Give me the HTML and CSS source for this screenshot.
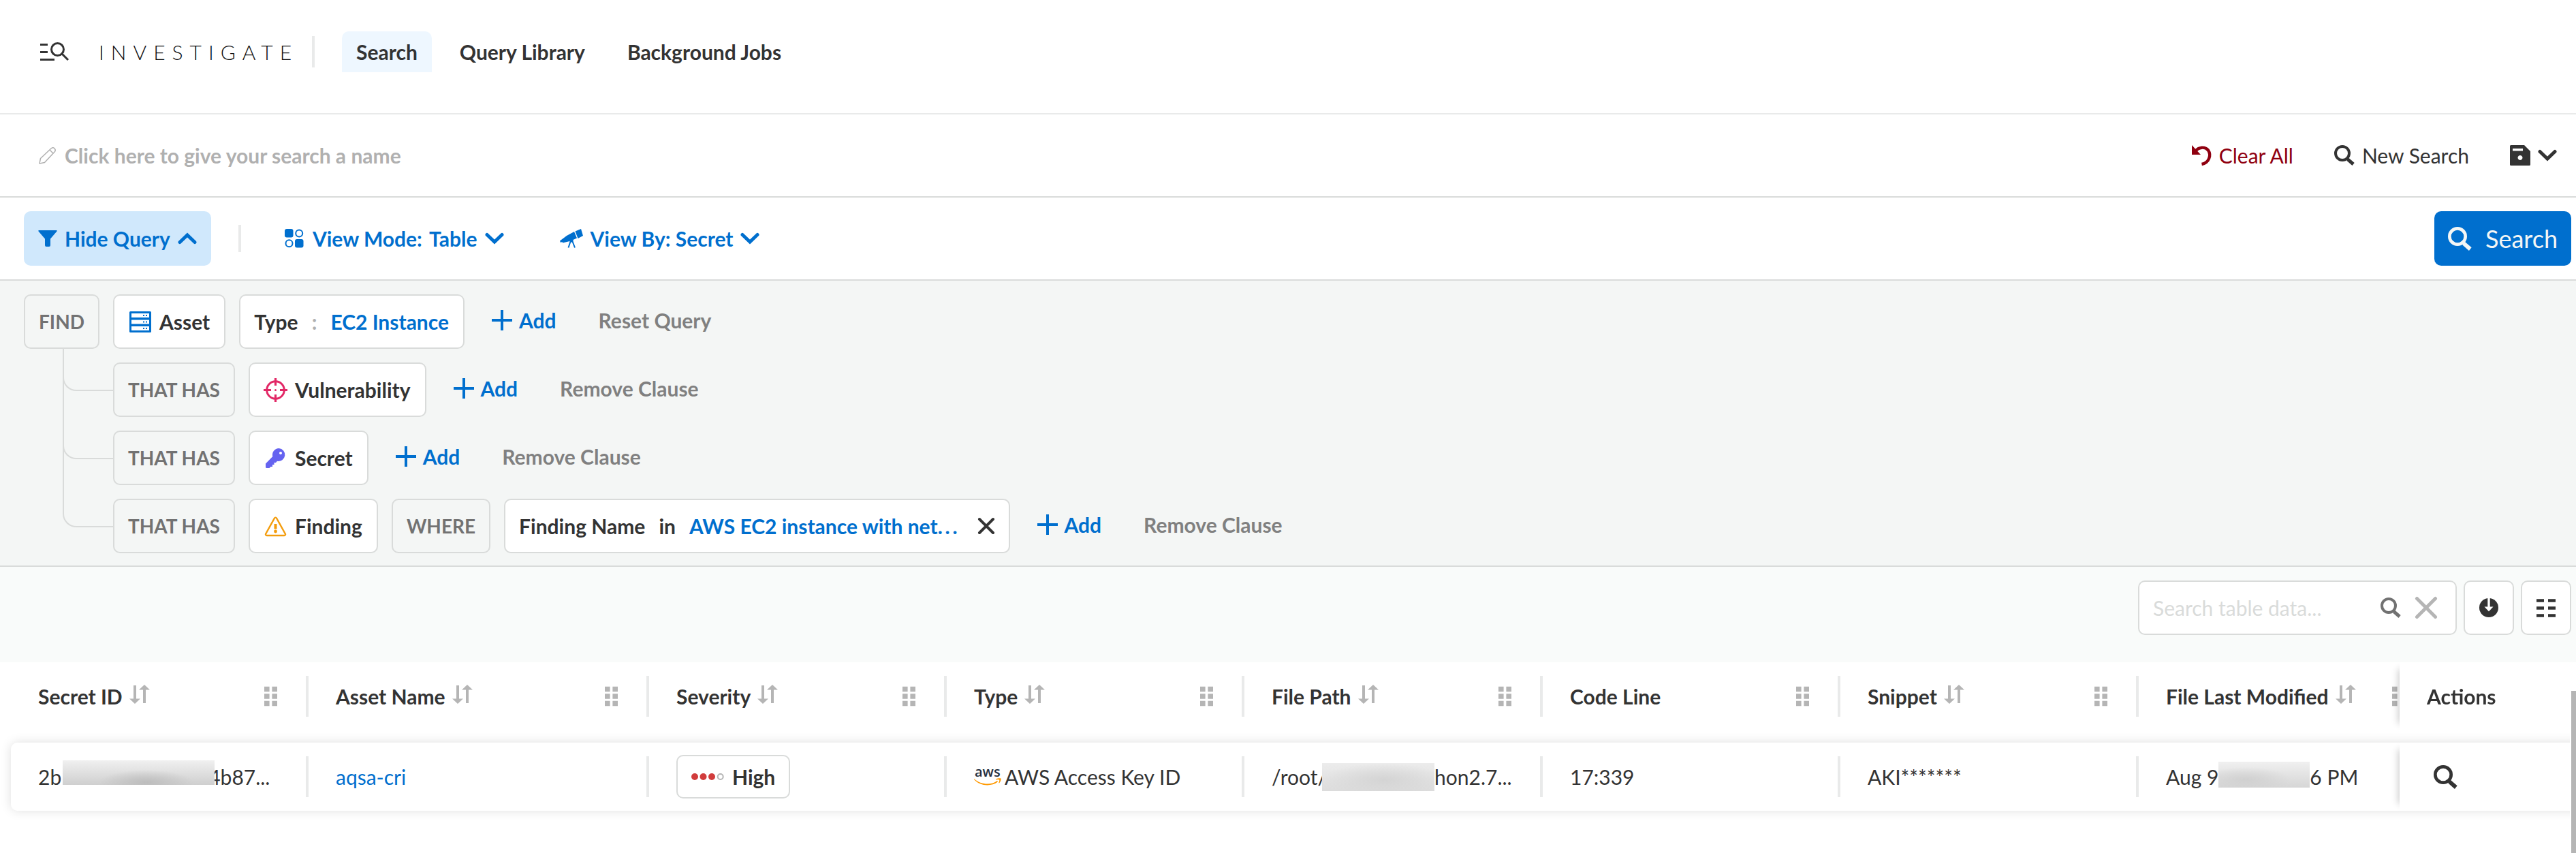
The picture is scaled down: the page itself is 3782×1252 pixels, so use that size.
FILE: index.html
```html
<!DOCTYPE html>
<html lang="en">
<head>
<meta charset="utf-8">
<title>Investigate</title>
<link rel="stylesheet" href="styles.css">
</head>
<body>
<svg class="sprite" aria-hidden="true">
  <symbol id="i-search" viewBox="0 0 30 30"><circle cx="12" cy="12" r="10" fill="none" stroke="currentColor" stroke-width="4"/><path d="M18.500 20.500l2.500-2 8.700 7.500-3.200 4-8-7z" fill="currentColor"/></symbol>
  <symbol id="i-down" viewBox="0 0 28 18"><path d="M3 3.500l11 10.500L25 3.500" fill="none" stroke="currentColor" stroke-width="5" stroke-linecap="round"/></symbol>
  <symbol id="i-up" viewBox="0 0 28 18"><path d="M3 14.500l11-10.500L25 14.500" fill="none" stroke="currentColor" stroke-width="5" stroke-linecap="round"/></symbol>
  <symbol id="i-plus" viewBox="0 0 30 30"><path d="M15 0v30M0 15h30" fill="none" stroke="currentColor" stroke-width="4"/></symbol>
  <symbol id="i-sort" viewBox="0 0 30 28"><path d="M8 1v21M22 27V6" fill="none" stroke="currentColor" stroke-width="4"/><path d="M0 20.500h16L8 28zM14 7.500h16L22 0z" fill="currentColor"/></symbol>
  <symbol id="i-grip" viewBox="0 0 20 30"><path d="M0 0h8v8H0zM12 0h8v8h-8zM0 11h8v8H0zM12 11h8v8h-8zM0 22h8v8H0zM12 22h8v8h-8z" fill="currentColor"/></symbol>
</svg>

<header class="topbar">
  <svg class="brand-icon" viewBox="0 0 42 28"><path d="M0 3.500h11M0 14.500h11M0 25.500h21" stroke="currentColor" stroke-width="3"/><circle cx="25.500" cy="10.500" r="9" fill="none" stroke="currentColor" stroke-width="3"/><path d="M32 17l9 9" stroke="currentColor" stroke-width="3"/></svg>
  <h1 class="brand">INVESTIGATE</h1>
  <nav class="tabs">
    <a class="tab tab-active" href="#search">Search</a>
    <a class="tab" href="#library">Query Library</a>
    <a class="tab" href="#jobs">Background Jobs</a>
  </nav>
</header>

<section class="namebar">
  <label class="name-field">
    <svg class="ic-26" viewBox="0 0 26 26"><path d="M1 25l1.500-7.500L18.500 2.500a3.600 3.600 0 0 1 5 5L8.500 23.500zM16 5l5 5" fill="none" stroke="currentColor" stroke-width="1.500" stroke-linejoin="round"/></svg>
    <input class="name-input" type="text" aria-label="Search name" placeholder="Click here to give your search a name">
  </label>
  <div class="name-actions">
    <button class="link-btn danger" type="button"><svg class="ic-30" viewBox="0 0 30 30"><path d="M6 9C11 3 20 1.500 25 7.500C30 15 26 26 15.500 28" fill="none" stroke="currentColor" stroke-width="4.400"/><path d="M1 0v14h13z" fill="currentColor"/></svg>Clear All</button>
    <button class="link-btn" type="button"><svg class="ic-30"><use href="#i-search"/></svg>New Search</button>
    <button class="link-btn" type="button" aria-label="Save search"><svg class="ic-30" viewBox="0 0 30 30"><path d="M1.500 0H21l9 9v19.500a1.500 1.500 0 0 1-1.500 1.500h-27A1.500 1.500 0 0 1 0 28.500v-27A1.500 1.500 0 0 1 1.500 0zM4 5v3.500h15V5zM15 15a3.500 3.500 0 1 0 .01 0z" fill="currentColor" fill-rule="evenodd"/></svg><svg class="ic-chev"><use href="#i-down"/></svg></button>
  </div>
</section>

<section class="modebar">
  <button class="mode-btn mode-on" type="button"><svg class="ic-28" viewBox="0 0 28 28"><path d="M1 2h26a1 1 0 0 1 .5 1.500L18 14.500V24a2 2 0 0 1-2 2h-4a2 2 0 0 1-2-2v-9.500L.5 3.500A1 1 0 0 1 1 2z" fill="currentColor"/></svg>Hide Query<svg class="ic-chev"><use href="#i-up"/></svg></button>
  <span class="mode-divider"></span>
  <button class="mode-btn" type="button"><svg class="ic-30" viewBox="0 -1 30 30"><rect x="0" y="0" width="12.500" height="12.500" rx="3" fill="currentColor"/><rect x="15" y="15" width="12.500" height="12.500" rx="3" fill="currentColor"/><circle cx="21.200" cy="6.500" r="5" fill="none" stroke="currentColor" stroke-width="2"/><circle cx="6.500" cy="21.200" r="5" fill="none" stroke="currentColor" stroke-width="2"/></svg><span>View Mode: <span class="mode-value">Table</span></span><svg class="ic-chev"><use href="#i-down"/></svg></button>
  <button class="mode-btn" type="button"><svg class="ic-scope" viewBox="0 0 34 28"><path d="M0 17.500L10 10l11-6 4 9.500-5.500 2.500a3 3 0 0 0-5 2L4 20.500l-.5-1.500L1 20z" fill="currentColor"/><path d="M22.500 3.500L31 0l3 10-7.500 4z" fill="currentColor"/><circle cx="17" cy="17" r="2.600" fill="currentColor"/><path d="M16 17l-3.500 10.500M18 17l4 10.500" stroke="currentColor" stroke-width="2"/></svg>View By: Secret<svg class="ic-chev"><use href="#i-down"/></svg></button>
  <button class="run-btn" type="button"><svg class="ic-35"><use href="#i-search"/></svg>Search</button>
</section>

<section class="query">
  <div class="clause">
    <span class="keyword">FIND</span>
    <button class="pill" type="button"><svg class="ic-35 asset" viewBox="0 0 35 35"><path d="M3 3h30v29H3z" fill="#fff"/><path d="M3.500 2h29A1.500 1.500 0 0 1 34 3.500v28a1.500 1.500 0 0 1-1.500 1.500h-29A1.500 1.500 0 0 1 2 31.500v-28A1.500 1.500 0 0 1 3.500 2zM5 5v6h26V5zM5 14.500v6h26v-6zM5 24v6h26v-6z" fill="currentColor" fill-rule="evenodd"/><path d="M22 7h2v2h-2zM26 7h2v2h-2zM22 16.500h2v2h-2zM26 16.500h2v2h-2zM22 26h2v2h-2zM26 26h2v2h-2z" fill="currentColor"/></svg>Asset</button>
    <button class="pill pill-cond" type="button"><span>Type</span><span class="op">:</span><span class="val">EC2 Instance</span></button>
    <div class="clause-actions">
      <button class="add" type="button"><svg class="ic-30"><use href="#i-plus"/></svg>Add</button>
      <button class="remove" type="button">Reset Query</button>
    </div>
  </div>
  <div class="branches">
    <div class="clause branch">
      <span class="keyword">THAT HAS</span>
      <button class="pill" type="button"><svg class="ic-35 vuln" viewBox="0 0 35 35"><circle cx="17.500" cy="17.500" r="12.800" fill="none" stroke="currentColor" stroke-width="3"/><path d="M17.500 0v11M17.500 24v11M0 17.500h11M24 17.500h11" stroke="currentColor" stroke-width="3.200"/><circle cx="17.500" cy="17.500" r="1.500" fill="currentColor"/></svg>Vulnerability</button>
      <div class="clause-actions">
        <button class="add" type="button"><svg class="ic-30"><use href="#i-plus"/></svg>Add</button>
        <button class="remove" type="button">Remove Clause</button>
      </div>
    </div>
    <div class="clause branch">
      <span class="keyword">THAT HAS</span>
      <button class="pill" type="button"><svg class="ic-35 secret" viewBox="0 0 35 35"><path d="M22.500 3a9.500 9.500 0 1 1-2.500 18.800L18 24h-2.500v3H13v3h-2.500L8.500 32H4.500a1.500 1.500 0 0 1-1.500-1.500v-5L13.300 15A9.500 9.500 0 0 1 22.500 3zM25 8a2 2 0 1 0 .01 0z" fill="currentColor" fill-rule="evenodd"/></svg>Secret</button>
      <div class="clause-actions">
        <button class="add" type="button"><svg class="ic-30"><use href="#i-plus"/></svg>Add</button>
        <button class="remove" type="button">Remove Clause</button>
      </div>
    </div>
    <div class="clause branch">
      <span class="keyword">THAT HAS</span>
      <button class="pill" type="button"><svg class="ic-35 finding" viewBox="0 0 35 35"><path d="M16 5.500a1.700 1.700 0 0 1 3 0l12.800 23a1.700 1.700 0 0 1-1.500 2.500H4.700a1.700 1.700 0 0 1-1.500-2.500z" fill="none" stroke="currentColor" stroke-width="2.400"/><path d="M15.500 14h4v7.500h-4z" fill="currentColor"/><circle cx="17.500" cy="25" r="2.400" fill="currentColor"/></svg>Finding</button>
      <span class="keyword">WHERE</span>
      <div class="pill pill-cond"><span>Finding Name</span><span>in</span><span class="val">AWS EC2 instance with net.&#8201;.&#8201;.</span><button class="pill-x" type="button" aria-label="Remove condition"><svg class="ic-24" viewBox="0 0 24 24"><path d="M2 2l20 20M22 2L2 22" stroke="currentColor" stroke-width="4" stroke-linecap="round"/></svg></button></div>
      <div class="clause-actions">
        <button class="add" type="button"><svg class="ic-30"><use href="#i-plus"/></svg>Add</button>
        <button class="remove" type="button">Remove Clause</button>
      </div>
    </div>
  </div>
</section>

<section class="table-tools">
  <div class="table-search">
    <input class="table-input" type="text" aria-label="Search table data" placeholder="Search table data...">
    <svg class="ic-30 find"><use href="#i-search"/></svg>
    <button class="clear" type="button" aria-label="Clear"><svg class="ic-32" viewBox="0 0 32 32"><path d="M2.500 2.500l27 27M29.500 2.500l-27 27" stroke="currentColor" stroke-width="5" stroke-linecap="round"/></svg></button>
  </div>
  <button class="tool-btn" type="button" aria-label="Download"><svg class="ic-28" viewBox="0 0 28 28"><circle cx="14" cy="14" r="14" fill="currentColor"/><path d="M14 0v14" stroke="#fff" stroke-width="3.400"/><path d="M7.500 12.500h13L14 19.500z" fill="#fff"/></svg></button>
  <button class="tool-btn" type="button" aria-label="Columns"><svg class="ic-30" viewBox="0 0 30 30"><path d="M1 4.500h11M18 4.500h11M1 15.500h11M18 15.500h11M1 26.500h11M18 26.500h11" stroke="currentColor" stroke-width="4.400"/></svg></button>
</section>

<main class="results">
  <div class="table-scroll">
    <table class="grid">
      <colgroup><col class="c-std"><col class="c-wide"><col class="c-std"><col class="c-std"><col class="c-mid"><col class="c-std"><col class="c-mid"><col class="c-std"><col class="c-act"></colgroup>
      <thead>
        <tr>
          <th><div class="hcell">Secret ID<svg class="sort"><use href="#i-sort"/></svg><svg class="grip"><use href="#i-grip"/></svg></div></th>
          <th><div class="hcell">Asset Name<svg class="sort"><use href="#i-sort"/></svg><svg class="grip"><use href="#i-grip"/></svg></div></th>
          <th><div class="hcell">Severity<svg class="sort"><use href="#i-sort"/></svg><svg class="grip"><use href="#i-grip"/></svg></div></th>
          <th><div class="hcell">Type<svg class="sort"><use href="#i-sort"/></svg><svg class="grip"><use href="#i-grip"/></svg></div></th>
          <th><div class="hcell">File Path<svg class="sort"><use href="#i-sort"/></svg><svg class="grip"><use href="#i-grip"/></svg></div></th>
          <th><div class="hcell">Code Line<svg class="grip"><use href="#i-grip"/></svg></div></th>
          <th><div class="hcell">Snippet<svg class="sort"><use href="#i-sort"/></svg><svg class="grip"><use href="#i-grip"/></svg></div></th>
          <th><div class="hcell">File Last Modified<svg class="sort"><use href="#i-sort"/></svg><svg class="grip"><use href="#i-grip"/></svg></div></th>
          <th class="sticky"><div class="hcell pinned">Actions</div></th>
        </tr>
      </thead>
      <tbody>
        <tr class="record">
          <td><div class="cell">2b<span class="mask mask-id"></span>4b87...</div></td>
          <td><div class="cell"><a class="cell-link" href="#asset">aqsa-cri</a></div></td>
          <td><div class="cell"><span class="severity"><svg class="dots" viewBox="0 0 48 10"><circle cx="5" cy="5" r="5" fill="#d13c3c"/><circle cx="17.500" cy="5" r="5" fill="#d13c3c"/><circle cx="30" cy="5" r="5" fill="#d13c3c"/><circle cx="42.700" cy="5" r="4" fill="none" stroke="#b5b5b5" stroke-width="2"/></svg>High</span></div></td>
          <td><div class="cell"><svg class="aws" viewBox="0 0 40 26"><text class="aws-text" x="1" y="13">aws</text><path d="M0 16c10 9 25 10 34 3l1 1.500C25 28 9 27 0 17z" fill="#f90"/><path d="M32 16.500c3-1.500 6-1.500 7.500-1 .5 2-.5 5-2.500 7l-.8-.5c.8-1.800 1.300-3.500.9-4.500-1.200-.4-3-.2-4.800.1z" fill="#f90"/></svg>AWS Access Key ID</div></td>
          <td><div class="cell">/root/<span class="mask mask-path"></span>hon2.7...</div></td>
          <td><div class="cell">17:339</div></td>
          <td><div class="cell">AKI*******</div></td>
          <td><div class="cell">Aug 9<span class="mask mask-date"></span>6 PM</div></td>
          <td class="sticky"><div class="cell pinned"><button class="inspect" type="button" aria-label="Inspect"><svg class="ic-35"><use href="#i-search"/></svg></button></div></td>
        </tr>
      </tbody>
    </table>
  </div>
  <div class="scrollbar"><div class="thumb"></div></div>
</main>
</body>
</html>
```
FILE: styles.css
```css
* { box-sizing: border-box; }
body {
  margin: 0;
  min-height: 100vh;
  display: flex;
  flex-direction: column;
  background: #fff;
  color: #333;
  font: 400 30px/36px Lato, "Open Sans", sans-serif;
}
button, input {
  font: inherit;
  color: inherit;
  background: none;
  border: 0;
  padding: 0;
  margin: 0;
}
button { display: inline-flex; align-items: center; white-space: nowrap; }
svg { flex: none; display: block; overflow: visible; }
.sprite { width: 0; height: 0; position: absolute; }
.ic-24 { width: 24px; height: 24px; }
.ic-26 { width: 26px; height: 26px; }
.ic-28 { width: 28px; height: 28px; }
.ic-30 { width: 30px; height: 30px; }
.ic-32 { width: 32px; height: 32px; }
.ic-35 { width: 35px; height: 35px; }
.ic-scope { width: 34px; height: 28px; }
.ic-chev { width: 28px; height: 18px; }

.topbar {
  display: flex;
  align-items: center;
  padding: 46px 60px 60px 59px;
  border-bottom: 2px solid #e9eaea;
}
.brand-icon { width: 42px; height: 28px; margin-right: 44px; }
.brand {
  margin: 0 40px 0 0;
  padding-right: 20px;
  border-right: 4px solid #e9eaea;
  color: #111;
  font-size: 30px;
  font-weight: 300;
  line-height: 46px;
  letter-spacing: 10px;
}
.tabs { display: flex; gap: 20px; }
.tab {
  padding: 12px 21px;
  border-radius: 10px 10px 0 0;
  color: #333;
  font-weight: 700;
  text-decoration: none;
}
.tab-active { background: #eef7ff; }

.namebar {
  display: flex;
  align-items: center;
  justify-content: space-between;
  height: 122px;
  padding: 0 28px 0 57px;
  border-bottom: 2px solid #d9dbda;
}
.name-field { display: flex; align-items: center; gap: 12px; flex: 1; color: #b0b0b0; font-weight: 700; }
.name-input { flex: 1; }
.name-input::placeholder { color: #b0b0b0; opacity: 1; }
.name-actions { display: flex; gap: 60px; }
.link-btn { gap: 11px; }
.danger { color: #8f0010; }

.modebar {
  display: flex;
  align-items: center;
  padding: 20px 7px 20px 35px;
  border-bottom: 2px solid #d9dbda;
}
.mode-btn {
  gap: 11px;
  height: 80px;
  padding: 0 21px;
  border-radius: 10px;
  color: #006fce;
  font-weight: 700;
}
.mode-on { background: #d0e8fc; }
.mode-value { margin-left: 3px; }
.mode-divider { width: 4px; height: 40px; margin: 0 43px 0 40px; background: #e9eaea; }
.mode-btn + .mode-btn { margin-left: 40px; }
.run-btn {
  gap: 20px;
  height: 80px;
  margin-left: auto;
  padding: 0 20px;
  border-radius: 10px;
  background: #006fce;
  color: #f4f6f5;
  font-size: 36px;
}

.query {
  display: flex;
  flex-direction: column;
  gap: 20px;
  padding: 20px 35px 18px;
  background: #f4f6f5;
  border-bottom: 2px solid #d9dbda;
}
.clause { display: flex; gap: 20px; position: relative; }
.keyword, .pill {
  display: inline-flex;
  align-items: center;
  height: 80px;
  padding: 0 20px;
  border: 2px solid #d9dbda;
  border-radius: 10px;
  white-space: nowrap;
}
.keyword { color: #727272; font-weight: 700; font-size: 28px; }
.pill { gap: 11px; padding-right: 21px; background: #fff; font-weight: 700; }
.pill-cond { gap: 20px; }
.op { color: #b0b0b0; }
.val { color: #006fce; }
.pill-x { margin-left: 10px; }
.asset { color: #006fce; }
.vuln { color: #e22866; }
.secret { color: #6563f0; }
.finding { color: #f39c0c; }
.clause-actions { display: flex; gap: 62px; height: 76px; padding-left: 20px; font-weight: 700; }
.add { gap: 10px; color: #006fce; }
.remove { color: #808080; }
.branches { display: flex; flex-direction: column; gap: 20px; padding-left: 131px; }
.branch::before {
  content: "";
  position: absolute;
  right: 100%;
  bottom: 38px;
  width: 72px;
  height: 62px;
  border: solid #d9dbda;
  border-width: 0 0 2px 2px;
  border-radius: 0 0 0 20px;
}
.branch + .branch::before { height: 162px; }

.table-tools {
  display: flex;
  justify-content: flex-end;
  gap: 10px;
  padding: 20px 7px 40px;
  background: #f9fbfa;
}
.table-search, .tool-btn {
  display: flex;
  align-items: center;
  height: 80px;
  border: 2px solid #d9dbda;
  border-radius: 10px;
  background: #fff;
}
.table-search { width: 468px; padding: 0 27px 0 20px; }
.table-input { flex: 1; min-width: 0; }
.table-input::placeholder { color: #d9dbda; opacity: 1; }
.find { color: #727272; margin-right: 21px; }
.clear { color: #b5b5b5; }
.tool-btn { width: 74px; justify-content: center; }

.results { display: flex; flex: 1; }
.table-scroll { flex: 1; min-width: 0; padding-left: 16px; overflow-x: auto; scrollbar-width: none; }
.grid { table-layout: fixed; width: 3811px; border-spacing: 0; }
.c-std { width: 437px; }
.c-mid { width: 438px; }
.c-wide { width: 500px; }
.c-act { width: 250px; }
th { padding: 0 0 18px; text-align: left; font-weight: 700; }
td { padding: 0; }
.hcell, .cell {
  display: flex;
  align-items: center;
  height: 100px;
  padding-left: 40px;
  white-space: nowrap;
  background: linear-gradient(#e9eaea, #e9eaea) right center / 4px 60px no-repeat;
}
.hcell { padding-right: 46px; }
.record { box-shadow: 0 0 16px rgba(0, 0, 0, .13); border-radius: 10px; }
.record td { background: #fff; }
.record td:first-child { border-radius: 10px 0 0 10px; }
.sticky { position: sticky; right: 0; }
.pinned { background: #fff; box-shadow: -12px 0 10px -10px rgba(0, 0, 0, .2); }
.sort { width: 30px; height: 28px; margin: -6px 0 0 10px; color: #b5b5b5; }
.grip { width: 19px; height: 30px; margin-left: auto; color: #b5b5b5; }
.cell-link { color: #006fce; text-decoration: none; }
.severity {
  display: inline-flex;
  align-items: center;
  gap: 12px;
  height: 64px;
  padding: 0 20px;
  border: 2px solid #d9dbda;
  border-radius: 10px;
  font-weight: 700;
}
.dots { width: 48px; height: 10px; }
.aws { width: 40px; height: 26px; margin-right: 5px; }
.aws-text { font: 600 20px "Open Sans", sans-serif; fill: #252f3e; }
.mask { flex: none; z-index: 1; }
.mask-id { width: 223px; height: 36px; margin: 0 -9px 12px 2px; background: radial-gradient(ellipse at 55% 90%, #bdbdbd, transparent 40%), linear-gradient(#f0f0f0, #cfcfcf); }
.mask-path { width: 165px; height: 41px; margin-left: -7px; background: radial-gradient(ellipse at 55% 60%, #d4d4d4, transparent 70%), linear-gradient(#ececec, #dcdcdc); }
.mask-date { width: 134px; height: 38px; margin-bottom: 6px; background: radial-gradient(ellipse at 30% 70%, #d0d0d0, transparent 50%), linear-gradient(#f0f0f0, #d6d6d6); }
.inspect { margin-left: 10px; }
.scrollbar { width: 9px; padding: 42px 0 0 2px; display: flex; }
.thumb { flex: 1; background: #b5b5b5; }
```
